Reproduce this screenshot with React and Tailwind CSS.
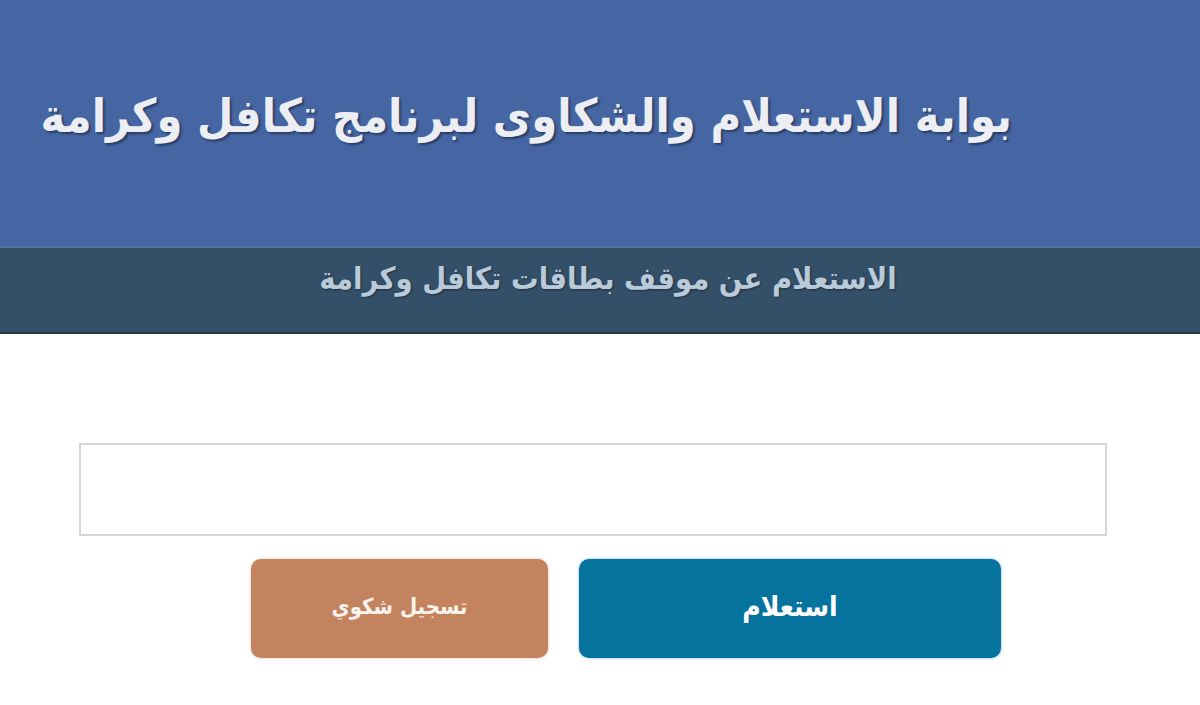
export default function App() {
  return (
    <div dir="rtl" className="min-h-[705px] w-[1200px] bg-white" style={{ fontFamily: '"DejaVu Sans Condensed", "DejaVu Sans", sans-serif' }}>
      {/* Header */}
      <header className="h-[246px] bg-[#4566a2] flex items-start pr-[188px] pt-[86px]">
        <h1 className="text-[46.5px] font-bold leading-[1.3] text-[#eceef4] [text-shadow:2px_2px_2px_rgba(20,30,60,0.55)] whitespace-nowrap">
          بوابة الاستعلام والشكاوى لبرنامج تكافل وكرامة
        </h1>
      </header>

      {/* Sub bar */}
      <div className="h-[88px] bg-[#344f68] border-t-2 border-[#5470a0] border-b-2 border-b-[#2a3a4a] flex justify-center pt-[10px] pl-[16px]">
        <h2 className="text-[30.6px] font-bold leading-[1.4] text-[#b9cad8] [text-shadow:1px_1px_2px_rgba(0,0,0,0.4)] whitespace-nowrap">
          الاستعلام عن موقف بطاقات تكافل وكرامة
        </h2>
      </div>

      {/* Form */}
      <div className="pt-[109px] pr-[93px]">
        <input
          type="text"
          className="block w-[1028px] h-[93px] border-2 border-[#d6d6d6] bg-white outline-none"
        />
        <div className="flex gap-[31px] mt-[23px] pr-[106px]">
          <button className="w-[422px] h-[99px] rounded-[10px] bg-[#06739f] text-white text-[28px] font-bold pb-[4px] shadow-[0_0_3px_rgba(0,110,160,0.5)]">
            استعلام
          </button>
          <button className="w-[297px] h-[99px] rounded-[10px] bg-[#c4835f] text-[#fbf3ee] text-[22px] font-bold pb-[4px] shadow-[0_0_3px_rgba(190,120,90,0.5)]">
            تسجيل شكوي
          </button>
        </div>
      </div>
    </div>
  );
}
